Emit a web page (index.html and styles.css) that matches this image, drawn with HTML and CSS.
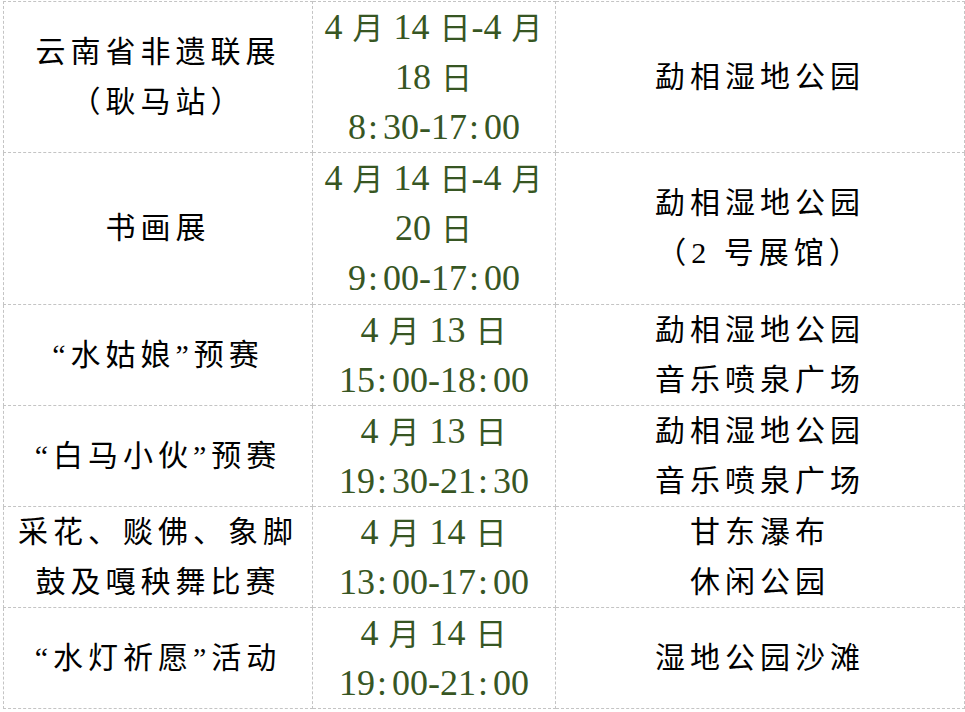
FILE: index.html
```html
<!DOCTYPE html>
<html lang="zh-CN">
<head>
<meta charset="utf-8">
<link rel="stylesheet" href="styles.css">
</head>
<body>
<table class="sched">
  <colgroup>
    <col class="c1"><col class="c2"><col class="c3">
  </colgroup>
  <tr>
    <td class="name">云南省非遗联展<br>（耿马站）</td>
    <td class="time">4 <span class="cj">月</span> 14 <span class="cj">日</span>-4 <span class="cj">月</span><br>18 <span class="cj">日</span><br>8<span class="co">:</span>30-17<span class="co">:</span>00</td>
    <td class="place">勐相湿地公园</td>
  </tr>
  <tr>
    <td class="name">书画展</td>
    <td class="time">4 <span class="cj">月</span> 14 <span class="cj">日</span>-4 <span class="cj">月</span><br>20 <span class="cj">日</span><br>9<span class="co">:</span>00-17<span class="co">:</span>00</td>
    <td class="place">勐相湿地公园<br>（2 号展馆）</td>
  </tr>
  <tr>
    <td class="name">“水姑娘”预赛</td>
    <td class="time">4 <span class="cj">月</span> 13 <span class="cj">日</span><br>15<span class="co">:</span>00-18<span class="co">:</span>00</td>
    <td class="place">勐相湿地公园<br>音乐喷泉广场</td>
  </tr>
  <tr>
    <td class="name">“白马小伙”预赛</td>
    <td class="time">4 <span class="cj">月</span> 13 <span class="cj">日</span><br>19<span class="co">:</span>30-21<span class="co">:</span>30</td>
    <td class="place">勐相湿地公园<br>音乐喷泉广场</td>
  </tr>
  <tr>
    <td class="name">采花、赕佛、象脚<br>鼓及嘎秧舞比赛</td>
    <td class="time">4 <span class="cj">月</span> 14 <span class="cj">日</span><br>13<span class="co">:</span>00-17<span class="co">:</span>00</td>
    <td class="place">甘东瀑布<br>休闲公园</td>
  </tr>
  <tr>
    <td class="name">“水灯祈愿”活动</td>
    <td class="time">4 <span class="cj">月</span> 14 <span class="cj">日</span><br>19<span class="co">:</span>00-21<span class="co">:</span>00</td>
    <td class="place">湿地公园沙滩</td>
  </tr>
</table>
</body>
</html>
```

FILE: styles.css
```css
html, body {
  margin: 0;
  padding: 0;
  background: #ffffff;
}

.sched {
  margin: 1px 0 0 3px;
  width: 961px;
  border-collapse: collapse;
  table-layout: fixed;
}

.c1 { width: 309px; }
.c2 { width: 243px; }
.c3 { width: 409px; }

.sched td {
  border: 1px dashed #c4c4c4;
  padding: 0;
  text-align: center;
  vertical-align: middle;
  line-height: 50.1px;
  white-space: nowrap;
}

.name, .place {
  font-family: "Liberation Serif", "Noto Sans CJK SC", serif;
  font-size: 30px;
  letter-spacing: 5px;
  color: #000000;
}

.time {
  font-family: "Liberation Serif", serif;
  font-size: 36px;
  letter-spacing: 0;
  color: #375623;
}

.cj {
  font-family: "Noto Sans CJK SC", sans-serif;
  font-size: 31px;
  line-height: 1;
  padding: 0 1px;
}

.co {
  padding: 0 5px 0 2px;
}
```
